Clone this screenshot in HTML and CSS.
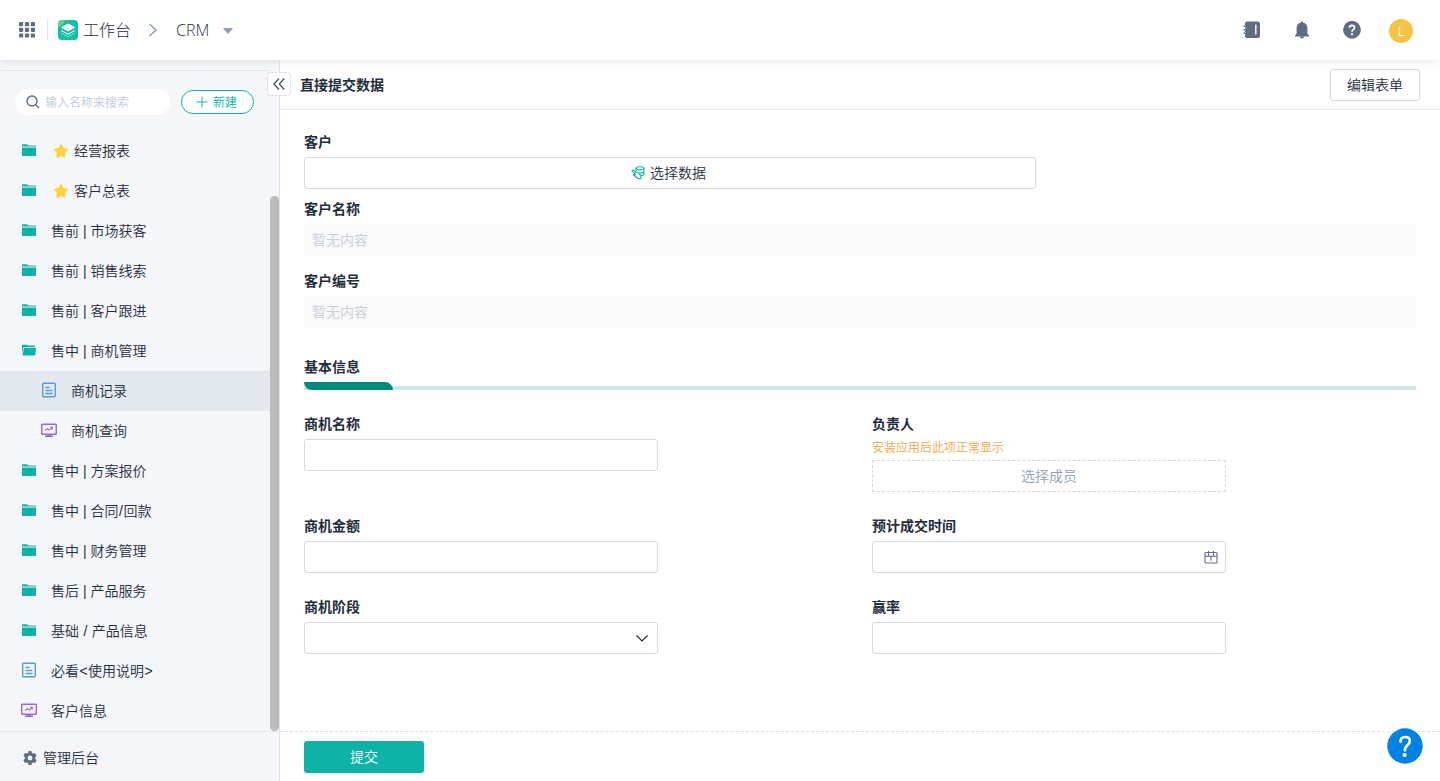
FILE: index.html
```html
<!DOCTYPE html>
<html lang="zh-CN">
<head>
    <meta charset="UTF-8">
    <meta name="viewport" content="width=device-width, initial-scale=1.0">
    <title>CRM</title>
    <link rel="stylesheet" href="styles.css">
</head>
<body>
    <!-- shared icons -->
    <svg class="sprite" width="0" height="0">
        <symbol id="folder" viewBox="0 0 16 16">
            <path d="M1 4.6V2.9Q1 2.3 1.6 2.3H5.6L7.3 3.4H14.4Q15 3.4 15 4V4.6z" fill="currentColor"/>
            <path d="M1 5.6H15V13.4Q15 14 14.4 14H1.6Q1 14 1 13.4z" fill="currentColor"/>
        </symbol>
        <symbol id="folder-open" viewBox="0 0 16 16">
            <path d="M1 11V3.3Q1 2.7 1.6 2.7H6L7.3 3.5H13.4Q14 3.5 14 4.1V5H3.2L2.4 5.4z" fill="currentColor"/>
            <path d="M3 5.8H15L14.3 12.8Q14.2 13.5 13.6 13.5H2.2Q1.5 13.5 1.6 12.8z" fill="currentColor"/>
        </symbol>
        <symbol id="doc" viewBox="0 0 16 16">
            <rect x="1.7" y="1.2" width="12.6" height="13.6" rx="1" fill="none" stroke="currentColor" stroke-width="1.4"/>
            <path d="M4.5 5.5H8.5M4.5 8.5H11.5M4.5 11.5H11.5" stroke="currentColor" stroke-width="1.3"/>
        </symbol>
        <symbol id="board" viewBox="0 0 16 16">
            <rect x=".7" y="2.2" width="14.6" height="10" rx="1" fill="none" stroke="currentColor" stroke-width="1.5"/>
            <path d="M6 12H10V13.5H12V15H4V13.5H6z" fill="currentColor"/>
            <path d="M4 8.6L6.5 6.5L8.3 8.1L11 5.6M9 5.3H11.3V7.6" fill="none" stroke="currentColor" stroke-width="1.1"/>
        </symbol>
        <symbol id="star" viewBox="0 0 16 16">
            <path d="M8 2.3L9.8 5.9L13.9 6.6L11 9.5L11.6 13.5L8 11.7L4.4 13.5L5 9.5L2.1 6.6L6.2 5.9z" fill="#ffd43b" stroke="#ffd43b" stroke-width="2" stroke-linejoin="round"/>
        </symbol>
    </svg>

    <header class="topbar">
        <svg class="apps" width="16" height="16" viewBox="0 0 16 16" fill="#5e6d82">
            <rect width="4.2" height="4.2" rx=".8"/><rect x="5.9" width="4.2" height="4.2" rx=".8"/><rect x="11.8" width="4.2" height="4.2" rx=".8"/>
            <rect y="5.7" width="4.2" height="4.2" rx=".8"/><rect x="5.9" y="5.7" width="4.2" height="4.2" rx=".8"/><rect x="11.8" y="5.7" width="4.2" height="4.2" rx=".8"/>
            <rect y="11.4" width="4.2" height="4.2" rx=".8"/><rect x="5.9" y="11.4" width="4.2" height="4.2" rx=".8"/><rect x="11.8" y="11.4" width="4.2" height="4.2" rx=".8"/>
        </svg>
        <span class="divider"></span>
        <svg class="logo" width="20" height="20" viewBox="0 0 20 20">
            <rect width="20" height="20" rx="4" fill="#15bfa6"/>
            <path d="M0 7V4Q0 0 4 0H7Q6 5 0 7z" fill="#6bd089"/>
            <path d="M3 12.7L10 16.2L17 12.7V13.6L10 17.2L3 13.6z" fill="#8ce0d3"/>
            <path d="M3 10L10 13.4L17 10V11.1L10 14.7L3 11.1z" fill="#d5f5ef"/>
            <path d="M10 4L16.5 7.4L10 10.9L3.5 7.4z" fill="#fff" stroke="#fff" stroke-linejoin="round"/>
        </svg>
        <span class="crumb">工作台</span>
        <svg class="sep" width="10" height="14" viewBox="0 0 10 14" fill="none" stroke="#91a1b7" stroke-width="1.6"><path d="M1.5 1L8 7L1.5 13"/></svg>
        <span class="crumb">CRM</span>
        <svg class="caret" width="10" height="6" viewBox="0 0 10 6"><path d="M.5 0H9.5Q10 .3 9.7 .7L5.5 5.6Q5 6 4.5 5.6L.3 .7Q0 .3 .5 0z" fill="#91a1b7"/></svg>
        <div class="tools">
            <svg width="18" height="18" viewBox="0 0 18 18">
                <path d="M4 .5H15Q17 .5 17 2.5V15Q17 17 15 17H4Q2 17 2 15V2.5Q2 .5 4 .5z" fill="#5e6d82"/>
                <path d="M.5 5.3H2.8M.5 8.8H2.8M.5 12.3H2.8" stroke="#fff" stroke-width="2.4"/>
                <path d="M.5 5.3H3.2M.5 8.8H3.2M.5 12.3H3.2" stroke="#5e6d82" stroke-width="1.4"/>
                <path d="M12.8 3.8V13.6" stroke="#fff" stroke-width="1.4"/>
            </svg>
            <svg width="18" height="18" viewBox="0 0 18 18" fill="#5e6d82">
                <path d="M8 1.5Q8 .2 9 .2T10 1.5Q14.4 2.5 14.4 7.4V12.4L16 14.4V15.6H2V14.4L3.6 12.4V7.4Q3.6 2.5 8 1.5z"/>
                <path d="M6.8 15.5H11.2Q10.8 17.6 9 17.6T6.8 15.5z"/>
            </svg>
            <svg width="18" height="18" viewBox="0 0 18 18">
                <circle cx="9" cy="8.8" r="8.9" fill="#5e6d82"/>
                <path d="M6.5 6.8Q6.5 4.3 9 4.3T11.5 6.6Q11.5 7.7 10.2 8.6T9 10.8" fill="none" stroke="#fff" stroke-width="1.7"/>
                <circle cx="9" cy="13.2" r="1.1" fill="#fff"/>
            </svg>
            <span class="avatar">L</span>
        </div>
    </header>

    <div class="layout">
        <aside class="sidebar">
            <div class="search-row">
                <div class="search">
                    <svg width="14" height="14" viewBox="0 0 14 14" fill="none" stroke="#5e6d82" stroke-width="1.4"><circle cx="6" cy="6" r="5"/><path d="M9.7 9.7L13 13"/></svg>
                    <span>输入名称来搜索</span>
                </div>
                <button class="btn-new">
                    <svg width="12" height="12" viewBox="0 0 12 12" stroke="#0db3a6"><path d="M6 .5V11.5M.5 6H11.5"/></svg>
                    <span>新建</span>
                </button>
            </div>
            <ul class="menu">
                <li><svg class="icon"><use href="#folder"/></svg><svg class="star"><use href="#star"/></svg>经营报表</li>
                <li><svg class="icon"><use href="#folder"/></svg><svg class="star"><use href="#star"/></svg>客户总表</li>
                <li><svg class="icon"><use href="#folder"/></svg>售前 | 市场获客</li>
                <li><svg class="icon"><use href="#folder"/></svg>售前 | 销售线索</li>
                <li><svg class="icon"><use href="#folder"/></svg>售前 | 客户跟进</li>
                <li><svg class="icon"><use href="#folder-open"/></svg>售中 | 商机管理</li>
                <li class="sub active"><svg class="icon doc"><use href="#doc"/></svg>商机记录</li>
                <li class="sub"><svg class="icon board"><use href="#board"/></svg>商机查询</li>
                <li><svg class="icon"><use href="#folder"/></svg>售中 | 方案报价</li>
                <li><svg class="icon"><use href="#folder"/></svg>售中 | 合同<span class="slash">/</span>回款</li>
                <li><svg class="icon"><use href="#folder"/></svg>售中 | 财务管理</li>
                <li><svg class="icon"><use href="#folder"/></svg>售后 | 产品服务</li>
                <li><svg class="icon"><use href="#folder"/></svg>基础&nbsp;<span class="slash">/</span>&nbsp;产品信息</li>
                <li><svg class="icon doc"><use href="#doc"/></svg>必看<span class="angle">&lt;</span>使用说明<span class="angle">&gt;</span></li>
                <li><svg class="icon board"><use href="#board"/></svg>客户信息</li>
            </ul>
            <div class="admin">
                <svg width="14" height="14" viewBox="0 0 14 14">
                    <path d="M5.6 0H8.4L8.9 1.9L10.2 2.6L12 2.1L13.6 4.7L12.2 6.1V7.9L13.6 9.3L12 11.9L10.2 11.4L8.9 12.1L8.4 14H5.6L5.1 12.1L3.8 11.4L2 11.9L.4 9.3L1.8 7.9V6.1L.4 4.7L2 2.1L3.8 2.6L5.1 1.9zM7 4.6A2.4 2.4 0 1 0 7 9.4A2.4 2.4 0 1 0 7 4.6z" fill="#5e6d82" fill-rule="evenodd"/>
                </svg>
                管理后台
            </div>
            <div class="scrollbar"></div>
            <button class="collapse">
                <svg width="12" height="12" viewBox="0 0 12 12" fill="none" stroke="#404b5c" stroke-width="1.2"><path d="M6 .5L1 6L6 11.5M11.3 .5L6.3 6L11.3 11.5"/></svg>
            </button>
        </aside>

        <main class="main">
            <div class="title-bar">
                <h1>直接提交数据</h1>
                <button class="btn-edit">编辑表单</button>
            </div>
            <form class="form">
                <div class="field customer">
                    <label>客户</label>
                    <div class="input select-data">
                        <svg width="14" height="14" viewBox="0 0 14 14" fill="none" stroke="#0db3a6" stroke-width="1.1">
                            <ellipse cx="9" cy="2.3" rx="4" ry="1.6"/>
                            <path d="M5 2.3V6.2Q9 8.2 13 6V2.3M13 6V8.2Q12.4 9.4 10 9.6"/>
                            <path d="M5 8.8L1.8 5.8Q.4 4.6 1.4 4.2Q2.4 3.6 3.4 4.8L5.2 6.6M5 8.8Q2.6 7.8 2.4 9L7.4 12.8H9.8V10.6L8.4 7.6" stroke-linejoin="round"/>
                        </svg>
                        选择数据
                    </div>
                </div>
                <div class="field">
                    <label>客户名称</label>
                    <div class="readonly">暂无内容</div>
                </div>
                <div class="field">
                    <label>客户编号</label>
                    <div class="readonly">暂无内容</div>
                </div>
                <div class="section">
                    <h2>基本信息</h2>
                    <div class="section-line"><span></span></div>
                </div>
                <div class="grid">
                    <div class="field">
                        <label>商机名称</label>
                        <div class="input"></div>
                    </div>
                    <div class="field">
                        <label>负责人</label>
                        <p class="hint">安装应用后此项正常显示</p>
                        <div class="input member">选择成员</div>
                    </div>
                    <div class="field">
                        <label>商机金额</label>
                        <div class="input"></div>
                    </div>
                    <div class="field">
                        <label>预计成交时间</label>
                        <div class="input with-icon">
                            <svg width="14" height="14" viewBox="0 0 14 14" fill="none" stroke="#5e6d82" stroke-width="1.1"><rect x="1" y="2.5" width="12" height="10.5" rx="1"/><path d="M1 6.2H13M4.5 .8V6.2M9.5 .8V6.2M7 6.2V10.8"/></svg>
                        </div>
                    </div>
                    <div class="field">
                        <label>商机阶段</label>
                        <div class="input with-icon">
                            <svg class="arrow" width="12" height="8" viewBox="0 0 12 8" fill="none" stroke="#1f2d3d" stroke-width="1.2"><path d="M.5 1.5L6 7L11.5 1.5"/></svg>
                        </div>
                    </div>
                    <div class="field">
                        <label>赢率</label>
                        <div class="input"></div>
                    </div>
                </div>
            </form>
            <div class="footer">
                <button class="btn-submit">提交</button>
            </div>
        </main>
    </div>

    <div class="help">
        <svg width="36" height="36" viewBox="0 0 36 36">
            <circle cx="18" cy="18" r="17.7" fill="#0081e6"/>
            <path d="M13.5 13.7Q13.5 9 18.2 9T22.8 13.2Q22.8 15.3 20.2 17.6T18 22.3" fill="none" stroke="#fff" stroke-width="2.7" stroke-linecap="round"/>
            <circle cx="17.6" cy="27" r="2.1" fill="#fff"/>
        </svg>
    </div>
</body>
</html>
```
FILE: styles.css
```css
* {
    box-sizing: border-box;
}
body {
    margin: 0;
    height: 781px;
    display: flex;
    flex-direction: column;
    overflow: hidden;
    font-family: "Liberation Sans", "Noto Sans CJK SC", sans-serif;
    font-size: 14px;
    font-weight: 350;
    line-height: 20px;
    color: #1f2d3d;
    background-color: white;
}
button {
    font: inherit;
    color: inherit;
    padding: 0;
    cursor: pointer;
}
svg {
    display: block;
    flex: none;
}
.sprite {
    position: absolute;
}

/* top bar */
.topbar {
    position: relative;
    z-index: 2;
    flex: none;
    height: 60px;
    padding: 0 27px 0 19px;
    display: flex;
    align-items: center;
    background-color: white;
    box-shadow: 0 2px 8px rgba(0, 0, 0, 0.08);
}
.apps {
    margin-top: -1px;
}
.divider {
    width: 1px;
    height: 20px;
    margin: 0 10px 0 12px;
    background-color: #e3e5e9;
}
.crumb {
    font-family: "Open Sans", "Noto Sans CJK SC", sans-serif;
    font-size: 16px;
    font-weight: 300;
    line-height: 24px;
}
.logo + .crumb {
    margin-left: 5px;
}
.sep {
    margin: 0 18px 0 17px;
}
.caret {
    margin-left: 14px;
    margin-top: 1px;
}
.tools {
    margin-left: auto;
    display: flex;
    align-items: center;
    gap: 32px;
}
.avatar {
    width: 24px;
    height: 24px;
    margin: 2px 0 0 -4px;
    border-radius: 50%;
    background-color: #f6c445;
    color: white;
    font-family: "Open Sans", sans-serif;
    font-size: 12px;
    font-weight: 400;
    line-height: 25px;
    text-align: center;
}
.layout {
    flex: 1;
    display: flex;
    min-height: 0;
}

/* sidebar */
.sidebar {
    position: relative;
    width: 280px;
    display: flex;
    flex-direction: column;
    padding-top: 10px;
    border-right: 1px solid #dfe1e5;
    background-color: #f4f6fa;
}
.search-row {
    width: 270px;
    height: 61px;
    padding: 1px 16px 0 15px;
    display: flex;
    align-items: center;
    justify-content: space-between;
    border-top: 1px solid #e3e5e9;
}
.search {
    width: 155px;
    height: 26px;
    padding-left: 11px;
    display: flex;
    align-items: center;
    gap: 5px;
    border-radius: 13px;
    background-color: white;
    color: #c0ccda;
    font-size: 12px;
}
.search span, .btn-new span {
    padding-top: 2px;
}
.btn-new {
    width: 73px;
    height: 24px;
    padding-right: 2px;
    display: flex;
    align-items: center;
    justify-content: center;
    gap: 5px;
    border: 1px solid #0db3a6;
    border-radius: 12px;
    background-color: white;
    color: #0db3a6;
    font-size: 12px;
}
.menu {
    flex: 1;
    width: 270px;
    margin: 0;
    padding: 0;
    list-style: none;
}
.menu li {
    height: 40px;
    padding-left: 21px;
    display: flex;
    align-items: center;
}
.menu .sub {
    padding-left: 41px;
}
.menu .active {
    background-color: #e3e8ef;
}
.slash {
    width: 5px;
    text-align: center;
}
.angle {
    width: 9px;
    text-align: center;
}
.icon {
    width: 16px;
    height: 16px;
    margin: 0 14px 2px 0;
    color: #0db3a6;
}
.icon.doc {
    color: #5b9bd5;
}
.icon.board {
    color: #9c68e0;
}
.star {
    width: 16px;
    height: 16px;
    margin: 0 5px 0 2px;
}
.admin {
    height: 50px;
    padding: 2px 0 0 23px;
    display: flex;
    align-items: center;
    gap: 6px;
    border-top: 1px solid #e3e5e9;
}
.scrollbar {
    position: absolute;
    right: 0;
    top: 136px;
    width: 9px;
    height: 535px;
    border-radius: 5px;
    background-color: #b9bbbd;
}
.collapse {
    position: absolute;
    z-index: 1;
    right: -12px;
    top: 12px;
    width: 24px;
    height: 24px;
    display: flex;
    align-items: center;
    justify-content: center;
    border: 1px solid #e3e5e9;
    border-radius: 3px;
    background-color: white;
}

/* form */
.main {
    flex: 1;
    display: flex;
    flex-direction: column;
}
.title-bar {
    height: 50px;
    padding: 0 20px;
    display: flex;
    align-items: center;
    justify-content: space-between;
    border-bottom: 1px solid #e6e8eb;
}
h1, h2, label {
    margin: 0;
    font-size: 14px;
    font-weight: bold;
}
.btn-edit {
    width: 90px;
    height: 32px;
    border: 1px solid #d5d7da;
    border-radius: 3px;
    background-color: white;
}
.form {
    flex: 1;
    padding: 17px 24px 0;
}
.field label, .section h2 {
    display: block;
    height: 30px;
    line-height: 30px;
}
.field {
    margin-bottom: 10px;
}
.customer {
    width: 732px;
    margin-bottom: 5px;
}
.input {
    height: 32px;
    display: flex;
    align-items: center;
    justify-content: center;
    border: 1px solid #d7d9dc;
    border-radius: 3px;
}
.select-data {
    gap: 5px;
    padding-right: 3px;
}
.readonly {
    height: 32px;
    padding-left: 8px;
    line-height: 32px;
    background-color: #f9f9f9;
    color: #c8cdda;
}
.section {
    margin-top: 24px;
}
.section-line {
    height: 8px;
    border-bottom: 4px solid #cce7e4;
}
.section-line span {
    display: block;
    width: 89px;
    height: 8px;
    border-radius: 0 8px 0 8px;
    background-color: #008a7d;
}
.grid {
    margin-top: 19px;
    display: grid;
    grid-template-columns: 354px 354px;
    column-gap: 214px;
    row-gap: 19px;
}
.grid .field {
    margin: 0;
}
.hint {
    margin: -1px 0 2px;
    font-size: 12px;
    color: #f0a848;
}
.member {
    border-style: dashed;
    border-radius: 0;
    color: #91a1b7;
}
.with-icon {
    justify-content: flex-end;
    padding-right: 7px;
}
.arrow {
    margin-right: 2px;
}
.footer {
    height: 50px;
    padding: 9px 24px;
    border-top: 1px dashed #dcdee1;
}
.btn-submit {
    width: 120px;
    height: 32px;
    border: none;
    border-radius: 3px;
    background-color: #0db3a6;
    color: white;
}
.help {
    position: absolute;
    z-index: 3;
    right: 17px;
    bottom: 17px;
}
```
